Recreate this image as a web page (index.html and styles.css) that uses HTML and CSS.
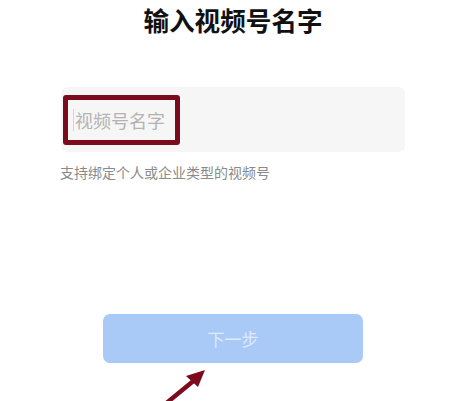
FILE: index.html
```html
<!DOCTYPE html>
<html lang="zh">
<head>
<meta charset="utf-8">
<link rel="stylesheet" href="styles.css">
</head>
<body>
<div class="page">
  <h1 class="title">输入视频号名字</h1>
  <div class="field">
    <span class="caret"></span>
    <span class="placeholder">视频号名字</span>
    <span class="mark"></span>
  </div>
  <p class="hint">支持绑定个人或企业类型的视频号</p>
  <div class="actions">
    <button class="next">下一步</button>
  </div>
  <svg class="arrow" width="70" height="50" viewBox="0 0 70 50">
    <line x1="8" y1="52" x2="47" y2="20" stroke="#7d0a1c" stroke-width="4.5"/>
    <polygon points="55,12 36,18 48,29" fill="#7d0a1c"/>
  </svg>
</div>
</body>
</html>
```
FILE: styles.css
```css
* { box-sizing: border-box; }
html, body { margin: 0; padding: 0; background: #fff; }
body {
  font-family: "Noto Sans CJK SC", "Noto Sans", sans-serif;
  width: 466px;
  height: 401px;
  overflow: hidden;
}
.page {
  position: relative;
  height: 401px;
  padding: 0 61px;
}
.title {
  margin: 3px 0 0;
  font-size: 25.6px;
  line-height: 34px;
  font-weight: 700;
  text-align: center;
  color: #111;
}
.field {
  position: relative;
  margin-top: 50px;
  height: 65px;
  background: #f6f6f6;
  border-radius: 7px;
  display: flex;
  align-items: center;
  padding-left: 12px;
}
.caret {
  width: 1px;
  height: 22px;
  background: #c9d6e6;
  margin-right: 1px;
}
.placeholder {
  font-size: 18px;
  line-height: 24px;
  color: #b3b3b3;
}
.mark {
  position: absolute;
  left: 2px;
  top: 8px;
  width: 117px;
  height: 50px;
  border: 5px solid #7b0a1d;
  border-radius: 3px;
}
.hint {
  margin: 10px 0 0 -1px;
  font-size: 14px;
  line-height: 20px;
  color: #8a8a8a;
}
.actions {
  display: flex;
  justify-content: center;
  margin-top: 132px;
}
.next {
  width: 260px;
  height: 49px;
  border: none;
  border-radius: 7px;
  background: #a9caf6;
  color: #dfeafc;
  font-family: inherit;
  font-size: 17px;
  padding: 0;
}
.arrow {
  position: absolute;
  left: 150px;
  top: 355px;
}
```
